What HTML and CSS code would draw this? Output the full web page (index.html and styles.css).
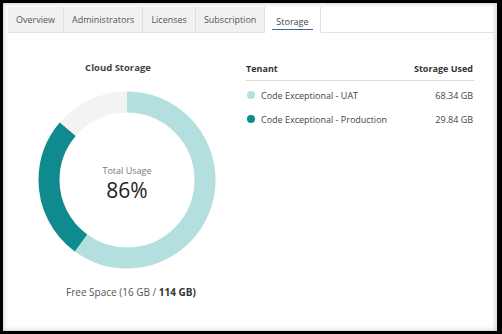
FILE: index.html
```html
<!DOCTYPE html>
<html>
<head>
<meta charset="utf-8">
<link rel="stylesheet" href="styles.css">
</head>
<body>
<div class="frame">
  <div class="panel">
    <div class="tabs">
      <div class="tab">Overview</div>
      <div class="tab">Administrators</div>
      <div class="tab">Licenses</div>
      <div class="tab">Subscription</div>
      <div class="tab active"><span>Storage</span></div>
      <div class="tab-fill"></div>
    </div>
    <div class="content">
      <div class="chart-col">
        <div class="chart-title">Cloud Storage</div>
        <div class="donut">
          <svg width="178" height="178" viewBox="0 0 178 178">
            <g transform="rotate(-90 89 89)">
              <circle cx="89" cy="89" r="78" fill="none" stroke="#f3f3f3" stroke-width="21"/>
              <circle cx="89" cy="89" r="78" fill="none" stroke="#b3dfdf" stroke-width="21" stroke-dasharray="293.8 490.1"/>
              <circle cx="89" cy="89" r="78" fill="none" stroke="#0f8a8f" stroke-width="21" stroke-dasharray="0 293.8 128.3 490.1"/>
            </g>
          </svg>
          <div class="donut-label">
            <div class="donut-sub">Total Usage</div>
            <div class="donut-value">86%</div>
          </div>
        </div>
        <div class="free">Free Space (16 GB / <b>114 GB)</b></div>
      </div>
      <div class="table-col">
        <div class="row head">
          <span>Tenant</span>
          <span>Storage Used</span>
        </div>
        <div class="row">
          <span class="name"><i class="dot light"></i>Code Exceptional - UAT</span>
          <span>68.34 GB</span>
        </div>
        <div class="row">
          <span class="name"><i class="dot dark"></i>Code Exceptional - Production</span>
          <span>29.84 GB</span>
        </div>
      </div>
    </div>
  </div>
</div>
</body>
</html>
```

FILE: styles.css
```css
html, body {
  margin: 0;
  padding: 0;
  background: #000;
}
.frame {
  width: 502px;
  height: 334px;
  box-sizing: border-box;
  border: 3px solid #000;
  border-right-width: 5px;
  background: #fff;
  box-shadow: inset 0 0 5px rgba(0,0,0,0.25);
  padding: 4px 2px 0 5px;
  font-family: "Open Sans", "Noto Sans", sans-serif;
  color: #333;
}
.panel {
  height: 100%;
  border-right: 1px solid #e4e4e4;
  display: flex;
  flex-direction: column;
}
.tabs {
  display: flex;
  height: 26px;
}
.tab {
  display: flex;
  align-items: center;
  padding: 0 8px;
  font-size: 9px;
  color: #555;
  background: #f1f1f1;
  border-right: 1px solid #dedede;
  border-bottom: 1px solid #e2e2e2;
  box-sizing: border-box;
}
.tab.active {
  background: #fff;
  padding: 0 7px 0 7px;
  border-bottom: 1px solid #fff;
  color: #444;
}
.tab.active span {
  border-bottom: 1.5px solid #3d6796;
  padding: 3px 4px 1px;
  margin-top: 3px;
}
.tab-fill {
  flex: 1;
  border-bottom: 1px solid #e2e2e2;
}
.content {
  display: flex;
  padding-top: 28px;
}
.chart-col {
  width: 238px;
  display: flex;
  flex-direction: column;
  align-items: center;
}
.chart-title {
  font-size: 9.5px;
  font-weight: 700;
  color: #444;
  line-height: 14px;
  margin-right: 18px;
}
.donut {
  position: relative;
  width: 178px;
  height: 178px;
  margin-top: 16px;
}
.donut svg {
  display: block;
}
.donut-label {
  position: absolute;
  inset: 0;
  display: flex;
  flex-direction: column;
  align-items: center;
  justify-content: center;
  padding-top: 8px;
}
.donut-sub {
  font-size: 9px;
  color: #777;
  line-height: 12px;
}
.donut-value {
  font-size: 21px;
  color: #222;
  line-height: 26px;
}
.free {
  margin-top: 16px;
  font-size: 10px;
  color: #555;
  padding-left: 8px;
}
.free b {
  color: #333;
}
.table-col {
  width: 228px;
}
.row {
  display: flex;
  justify-content: space-between;
  font-size: 9px;
  color: #444;
  height: 24px;
  align-items: center;
}
.row.head {
  font-weight: 700;
  height: 14px;
  padding-bottom: 5px;
  border-bottom: 1px solid #d9d9d9;
  margin-bottom: 2px;
  color: #333;
}
.row span:last-child {
  padding-right: 1px;
}
.name {
  display: flex;
  align-items: center;
}
.dot {
  width: 8px;
  height: 8px;
  border-radius: 50%;
  margin: 0 6px 0 1px;
}
.dot.light { background: #b3dfdf; }
.dot.dark { background: #0f8a8f; }
```
